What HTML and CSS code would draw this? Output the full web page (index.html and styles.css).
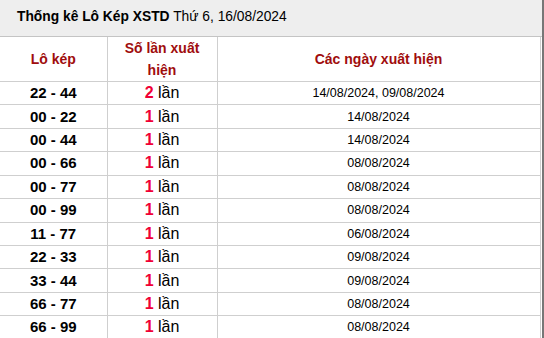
FILE: index.html
```html
<!DOCTYPE html>
<html lang="vi">
<head>
<meta charset="utf-8">
<link rel="stylesheet" href="styles.css">
</head>
<body>
<div class="box">
  <div class="title"><b>Thống kê Lô Kép XSTD</b> Thứ 6, 16/08/2024</div>
  <table class="stats">
    <colgroup><col class="c1"><col class="c2"><col class="c3"></colgroup>
    <thead>
      <tr><th>Lô kép</th><th>Số lần xuất<br>hiện</th><th>Các ngày xuất hiện</th></tr>
    </thead>
    <tbody>
      <tr><td class="pair">22 - 44</td><td class="cnt"><b>2</b> lần</td><td class="dates">14/08/2024, 09/08/2024</td></tr>
      <tr><td class="pair">00 - 22</td><td class="cnt"><b>1</b> lần</td><td class="dates">14/08/2024</td></tr>
      <tr><td class="pair">00 - 44</td><td class="cnt"><b>1</b> lần</td><td class="dates">14/08/2024</td></tr>
      <tr><td class="pair">00 - 66</td><td class="cnt"><b>1</b> lần</td><td class="dates">08/08/2024</td></tr>
      <tr><td class="pair">00 - 77</td><td class="cnt"><b>1</b> lần</td><td class="dates">08/08/2024</td></tr>
      <tr><td class="pair">00 - 99</td><td class="cnt"><b>1</b> lần</td><td class="dates">08/08/2024</td></tr>
      <tr><td class="pair">11 - 77</td><td class="cnt"><b>1</b> lần</td><td class="dates">06/08/2024</td></tr>
      <tr><td class="pair">22 - 33</td><td class="cnt"><b>1</b> lần</td><td class="dates">09/08/2024</td></tr>
      <tr><td class="pair">33 - 44</td><td class="cnt"><b>1</b> lần</td><td class="dates">09/08/2024</td></tr>
      <tr><td class="pair">66 - 77</td><td class="cnt"><b>1</b> lần</td><td class="dates">08/08/2024</td></tr>
      <tr><td class="pair">66 - 99</td><td class="cnt"><b>1</b> lần</td><td class="dates">08/08/2024</td></tr>
    </tbody>
  </table>
</div>
</body>
</html>
```
FILE: styles.css
```css
html, body {
  margin: 0;
  padding: 0;
  background: #fff;
}
body {
  font-family: "Liberation Sans", Arial, sans-serif;
  color: #000;
  overflow: hidden;
}
.box {
  width: 542px;
  border-right: 2px solid #777;
  height: 338px;
}
.title {
  box-sizing: border-box;
  height: 37px;
  line-height: 34px;
  padding-left: 17px;
  background: #eeeeee;
  border-bottom: 1px solid #c4c4c4;
  font-size: 13.8px;
}
.title b {
  font-weight: bold;
}
.stats {
  width: 540px;
  border-collapse: collapse;
  table-layout: fixed;
}
.c1 { width: 107px; }
.c2 { width: 110px; }
.c3 { width: 323px; }
.stats th, .stats td {
  border: 1px solid #cfcfcf;
  text-align: center;
  padding: 0;
}
.stats tr > :first-child { border-left: none; }
.stats thead th { border-top: none; }
.stats th {
  color: #a00d0d;
  font-size: 14px;
  font-weight: bold;
  line-height: 22px;
  height: 43px;
}
.stats td {
  height: 22.43px;
  line-height: 22px;
}
.pair {
  font-size: 15px;
  font-weight: bold;
}
.cnt {
  font-size: 16px;
}
.cnt b {
  color: #f00035;
}
.dates {
  font-size: 12.5px;
}
```
